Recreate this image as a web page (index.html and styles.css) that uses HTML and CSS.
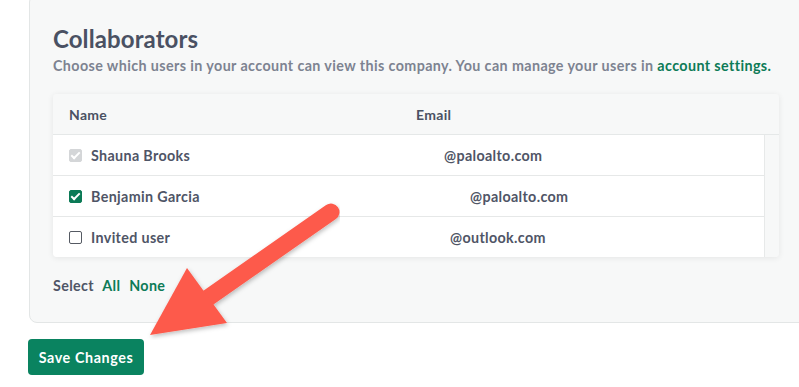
FILE: index.html
```html
<!DOCTYPE html>
<html>
<head>
    <meta name='viewport' content='width=device-width, initial-scale=1.0'>
    <title>Collaborators</title>
    <link rel="stylesheet" href="styles.css">
</head>
<body>
    <div class='panel'>
        <h2 class='title'>Collaborators</h2>
        <p class='subtitle'>Choose which users in your account can view this company. You can manage your users in <a href='#' class='link'>account settings.</a></p>

        <div class='table'>
            <div class='table-head'>
                <div class='col-name'>Name</div>
                <div class='col-email'>Email</div>
            </div>
            <div class='table-body'>
                <div class='rows'>
                    <div class='row'>
                        <div class='col-name'><span class='check check-disabled'></span>Shauna Brooks</div>
                        <div class='col-email'><span class='email email-a'>@paloalto.com</span></div>
                    </div>
                    <div class='row'>
                        <div class='col-name'><span class='check check-on'></span>Benjamin Garcia</div>
                        <div class='col-email'><span class='email email-b'>@paloalto.com</span></div>
                    </div>
                    <div class='row'>
                        <div class='col-name'><span class='check'></span>Invited user</div>
                        <div class='col-email'><span class='email email-c'>@outlook.com</span></div>
                    </div>
                </div>
                <div class='scrollbar'></div>
            </div>
        </div>

        <div class='select'>Select <a href='#' class='link'>All</a> <a href='#' class='link'>None</a></div>
    </div>

    <button class='save-btn'>Save Changes</button>

    <svg class='arrow' width='220' height='150' viewBox='0 0 220 150'>
        <defs>
            <filter id='shadow' x='-20%' y='-20%' width='140%' height='140%'>
                <feDropShadow dx='1' dy='2' stdDeviation='2' flood-color='#000' flood-opacity='0.25'/>
            </filter>
        </defs>
        <g filter='url(#shadow)' fill='#fd5a4b'>
            <line x1='211' y1='22' x2='85' y2='110' stroke='#fd5a4b' stroke-width='17' stroke-linecap='round'/>
            <polygon points='67,78 107,133 30,145'/>
        </g>
    </svg>
</body>
</html>
```

FILE: styles.css
```css
body {
    margin: 0;
    background-color: white;
    font-family: Lato, "Noto Sans", sans-serif;
    color: #4b5263;
    overflow: hidden;
    position: relative;
    height: 387px;
}
.panel {
    margin: -6px 0 0 29px;
    width: 800px;
    padding: 29px 23px 28px 23px;
    background-color: #f7f8f8;
    border: 1px solid #e3e6e6;
    border-radius: 8px;
}
.title {
    margin: 0;
    font-size: 24px;
    line-height: 30px;
    font-weight: 700;
    color: #4a5163;
    letter-spacing: 0.1px;
}
.subtitle {
    margin: 2px 0 0 0;
    font-size: 14.3px;
    line-height: 20px;
    font-weight: 700;
    color: #7d8391;
    letter-spacing: 0.4px;
}
.link {
    color: #0d7b57;
    text-decoration: none;
    font-weight: 700;
}
.table {
    margin-top: 18px;
    width: 726px;
    border-radius: 4px;
    box-shadow: 0 1px 6px rgba(0, 0, 0, 0.08);
    overflow: hidden;
}
.table-head {
    display: flex;
    height: 40px;
    align-items: center;
    background-color: #f7f8f8;
    font-size: 14px;
    font-weight: 700;
    color: #4a5163;
    letter-spacing: 0.3px;
    border-bottom: 1px solid #e5e8e8;
}
.col-name {
    width: 347px;
    padding-left: 16px;
    display: flex;
    align-items: center;
}
.col-email {
    flex: 1;
}
.table-body {
    display: flex;
}
.rows {
    flex: 1;
    background-color: white;
}
.row {
    display: flex;
    align-items: center;
    height: 40px;
    border-top: 1px solid #e6e8e8;
    font-size: 14.3px;
    font-weight: 700;
    color: #4f5566;
    letter-spacing: 0.35px;
}
.row:first-child {
    border-top: none;
}
.scrollbar {
    width: 14px;
    background-color: #f7f8f8;
    border-left: 1px solid #e7e9e9;
}
.check {
    width: 11px;
    height: 11px;
    border: 1px solid #555a63;
    border-radius: 2px;
    margin-right: 9px;
    background-color: white;
    position: relative;
}
.check-on,
.check-disabled {
    border-color: #0b7a56;
    background-color: #0b7a56;
}
.check-disabled {
    border-color: #d4d6d8;
    background-color: #d4d6d8;
}
.check-on::after,
.check-disabled::after {
    content: '';
    position: absolute;
    left: 3px;
    top: 0px;
    width: 3px;
    height: 7px;
    border: solid white;
    border-width: 0 2px 2px 0;
    transform: rotate(45deg);
}
.email-a {
    padding-left: 28px;
}
.email-b {
    padding-left: 54px;
}
.email-c {
    padding-left: 34px;
}
.select {
    margin-top: 20px;
    font-size: 14.3px;
    font-weight: 700;
    color: #4f5566;
    letter-spacing: 0.35px;
    word-spacing: 5px;
}
.save-btn {
    margin: 16px 0 0 28px;
    width: 116px;
    height: 36px;
    border: none;
    border-radius: 4px;
    background-color: #0a8360;
    color: white;
    font-family: Lato, "Noto Sans", sans-serif;
    font-size: 14.3px;
    font-weight: 700;
    letter-spacing: 0.6px;
    cursor: pointer;
}
.arrow {
    position: absolute;
    left: 120px;
    top: 190px;
}
```
